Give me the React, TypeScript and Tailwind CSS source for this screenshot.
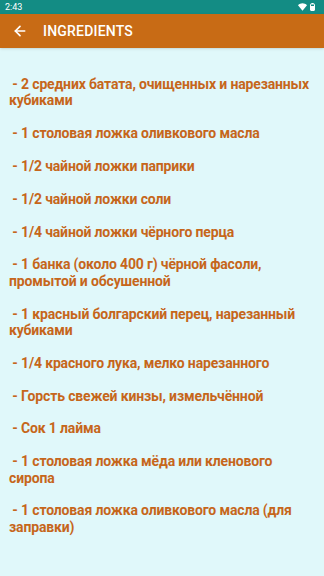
import { ArrowLeft } from 'lucide-react'

const items = [
  '2 средних батата, очищенных и нарезанных кубиками',
  '1 столовая ложка оливкового масла',
  '1/2 чайной ложки паприки',
  '1/2 чайной ложки соли',
  '1/4 чайной ложки чёрного перца',
  '1 банка (около 400 г) чёрной фасоли, промытой и обсушенной',
  '1 красный болгарский перец, нарезанный кубиками',
  '1/4 красного лука, мелко нарезанного',
  'Горсть свежей кинзы, измельчённой',
  'Сок 1 лайма',
  '1 столовая ложка мёда или кленового сиропа',
  '1 столовая ложка оливкового масла (для заправки)',
]

function StatusBar() {
  return (
    <div className="flex h-[14px] items-center justify-between bg-[#138c84] pl-[5px] pr-[9px] text-[9px] text-white">
      <span className="leading-none">2:43</span>
      <div className="flex items-center gap-[3px]">
        <svg width="9" height="8" viewBox="0 0 24 20" fill="white">
          <path d="M12 20 0 5C3.5 2 7.5 0 12 0s8.5 2 12 5L12 20z" />
        </svg>
        <svg width="5" height="8" viewBox="0 0 10 16" fill="none" stroke="white" strokeWidth="2">
          <rect x="1" y="2" width="8" height="13" rx="1" />
          <rect x="3" y="0" width="4" height="2" fill="white" stroke="none" />
          <rect x="2" y="6" width="6" height="9" fill="white" stroke="none" />
        </svg>
      </div>
    </div>
  )
}

export default function App() {
  return (
    <div className="flex h-[576px] w-[324px] flex-col overflow-hidden bg-[#e0f8fa] font-['Roboto',sans-serif]">
      <StatusBar />
      <div className="flex h-[34px] items-center bg-[#c86b15] text-white shadow-sm">
        <ArrowLeft className="ml-[12px] h-[16px] w-[16px]" strokeWidth={2.5} />
        <span className="ml-[15px] text-[14px] font-medium tracking-[0.2px]">INGREDIENTS</span>
      </div>
      <div className="flex flex-col gap-[16.4px] pl-[9px] pr-[6px] pt-[28px] text-[14px] font-bold leading-[16.4px] tracking-[-0.15px] text-[#c6661b]">
        {items.map(t => (
          <p key={t}>&nbsp;- {t}</p>
        ))}
      </div>
    </div>
  )
}
